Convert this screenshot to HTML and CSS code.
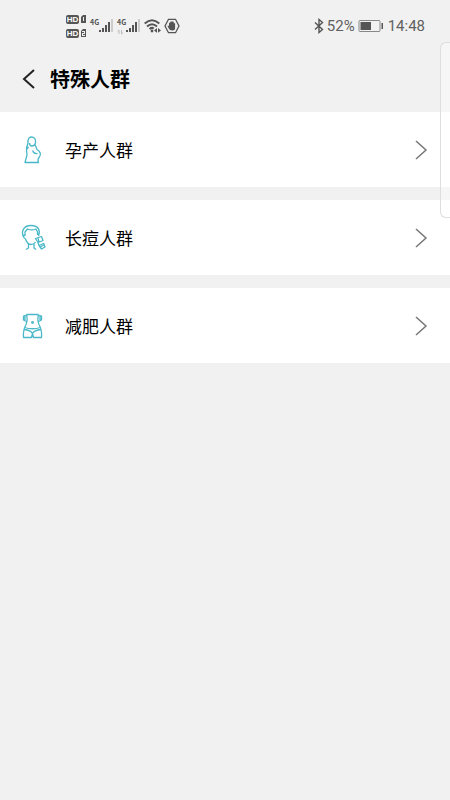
FILE: index.html
```html
<!DOCTYPE html>
<html lang="zh-CN">
<head>
<meta charset="utf-8">
<meta name="viewport" content="width=device-width, initial-scale=1">
<title>特殊人群</title>
<link rel="stylesheet" href="styles.css">
</head>
<body>
<div class="status">
  <div class="status-left">
    <div class="sims">
      <div class="sim"><span class="hd">HD</span><svg width="6" height="8" viewBox="0 0 6 8"><path class="solid" fill-rule="evenodd" d="M0 2l2-2h3v8H0zM2 2v4h1V2z"/></svg></div>
      <div class="sim"><span class="hd">HD</span><svg width="6" height="8" viewBox="0 0 6 8"><path class="solid" fill-rule="evenodd" d="M0 2l2-2h3v8H0zM1 2v1h2v1H1v3h3V6H2V5h2V2z"/></svg></div>
    </div>
    <div class="signal">
      <span class="net">4G</span>
      <svg width="15" height="14" viewBox="0 0 15 14"><path class="solid" d="M0 11h2v2H0zM3 9h2v4H3zM6 6h2v7H6zM9 3h2v10H9z"/><path class="faint" d="M12 0h2v13h-2z"/></svg>
    </div>
    <div class="signal">
      <span class="net">4G</span>
      <svg class="arrows" width="7" height="6" viewBox="0 0 7 6"><path d="M2 5V1L.7 2.300M4.500 1v4l1.400-1.300"/></svg>
      <svg width="15" height="14" viewBox="0 0 15 14"><path class="solid" d="M0 11h2v2H0zM3 9h2v4H3zM6 6h2v7H6zM9 3h2v10H9z"/><path class="faint" d="M12 0h2v13h-2z"/></svg>
    </div>
    <svg class="wifi" width="17" height="14" viewBox="0 0 17 14"><path d="M.7 4.500Q8-2 15.300 4.500M3 7.500Q8 3 13 7.500M5.500 10Q8 8 9.800 9.500"/><circle class="solid" cx="8" cy="12" r="1.400"/><path class="solid" d="m10 11.400 3-2.300v4.600zM17 11.400l-3-2.300v4.600z"/></svg>
    <svg class="hand" width="16" height="16" viewBox="0 0 16 16"><path d="M4.500 1.300h7L15 8l-3.500 6.700h-7L1 8z"/><path class="solid" d="M5 8V5q.6-.8 1.200 0V4q.6-.8 1.200 0v-.5q.6-.8 1.200 0V4q.6-.8 1.200 0v1.500q.7-.8 1.300 0V10q0 2.500-2.800 2.500Q5.500 12.500 4.500 10L3.500 8q.5-.9 1.500 0z"/></svg>
  </div>
  <div class="status-right">
    <svg class="bluetooth" width="10" height="16" viewBox="0 0 10 16"><path d="m1 4.500 7.500 7L5 14.500v-13l3.500 3L1 11.500"/></svg>
    <span>52%</span>
    <svg class="battery" width="26" height="14" viewBox="0 0 26 14"><rect x="1" y="1.500" width="21" height="11" rx="1"/><path class="solid" d="M2.500 3H13v8H2.500zM23.500 4H25v6h-1.500z"/></svg>
    <span>14:48</span>
  </div>
</div>
<header class="header">
  <button class="back" type="button" aria-label="返回"><svg width="14" height="20" viewBox="0 0 14 20"><path d="M12 1 2 10l10 9"/></svg></button>
  <h1>特殊人群</h1>
</header>
<main class="list">
  <a class="row" href="#pregnancy">
    <svg class="icon" width="26" height="30" viewBox="0 0 26 30"><path d="M8 8.500C7.500 4 9 2 11.500 2s4.500 2 4 5.500C15 10 13.500 11 12 11c-2 0-2.500-1-2.500-3M8 8c0 2-2 3.500-1.500 6.500L8.500 12M6.500 14.500 7 20l-2 7.500h13.500c-.8-2-.5-4 .8-5.500 2.200-2.500 1-5.500-2.300-7.500L15 9.500M12.500 15.500c1 2.500 2.500 3.500 5 3"/></svg>
    <span>孕产人群</span>
    <svg class="chevron" width="14" height="20" viewBox="0 0 14 20"><path d="m2 1 10 9-10 9"/></svg>
  </a>
  <a class="row" href="#acne">
    <svg class="icon" width="26" height="30" viewBox="0 0 26 30"><path d="M3.500 14C1 9 3 2.500 11 2.500S20.500 8 18.500 13M5 13V9l2.500-3c2.500 1.200 6 1 8.500 0l1.500 3v3M5 12c-2-1-2 3 .5 4C6.500 19 8 21.500 11 21.500c2 0 3.500-1 4.500-2.500M8.500 21v4L6 26.500M14 20.500V25l2 1.500M15.500 15.500l6-2 1.500 4-5 2zM18 15l1 4M18 19.500l5-2M18 19.500l1 3 4.500-2M19 22.500l2.500 3.500 3.500-2-1.500-4M20 24l4-2"/></svg>
    <span>长痘人群</span>
    <svg class="chevron" width="14" height="20" viewBox="0 0 14 20"><path d="m2 1 10 9-10 9"/></svg>
  </a>
  <a class="row" href="#slimming">
    <svg class="icon" width="26" height="30" viewBox="0 0 26 30"><path d="M6.500 3.500h12M6.500 3.500c1 4 1 7-.5 10C4 17 3 21 3.500 26.500h8l1-4 1 4h8C22 21 21 17 19 13.500c-1.500-3-1.500-6-.5-10M4.500 16.500q8 2.500 16 0M4 18.500c5 .5 7.500 2 8.500 4 1-2 3.500-3.500 8.500-4M6.500 4l-3 1v4l3 1.500M18.500 4l3 1v4l-3 1.500M5 5v4M20 5v4"/><circle cx="12.500" cy="11.500" r=".8"/></svg>
    <span>减肥人群</span>
    <svg class="chevron" width="14" height="20" viewBox="0 0 14 20"><path d="m2 1 10 9-10 9"/></svg>
  </a>
</main>
<div class="edge-panel"></div>
</body>
</html>
```
FILE: styles.css
```css
* { box-sizing: border-box; }
body {
  margin: 0;
  min-height: 100vh;
  background: #f1f1f1;
  color: #000;
  font-family: "Liberation Sans", "Noto Sans CJK SC", sans-serif;
}
svg { display: block; flex: none; fill: none; stroke: #555; }
.solid { fill: #555; stroke: none; }
.faint { fill: #ccc; stroke: none; }
.status {
  display: flex;
  justify-content: space-between;
  align-items: center;
  height: 52px;
  padding: 0 25px 0 66px;
  color: #606060;
}
.status-left, .status-right { display: flex; align-items: center; }
.status-left { gap: 3px; }
.sims { display: flex; flex-direction: column; gap: 5px; }
.sim { display: flex; align-items: center; gap: 2px; }
.hd {
  width: 13px;
  height: 9px;
  border-radius: 2px;
  background: #555;
  color: #fff;
  font-size: 8px;
  font-weight: 700;
  line-height: 9px;
  text-align: center;
}
.signal { position: relative; display: flex; align-items: center; }
.net {
  height: 18px;
  width: 9px;
  color: #555;
  font-family: "Noto Sans CJK SC", sans-serif;
  font-size: 7px;
  font-weight: 700;
  line-height: 10px;
}
.arrows { position: absolute; left: 0; bottom: 0; stroke: #bbb; }
.wifi { stroke-width: 2; }
.hand { stroke-width: 1.3; }
.status-right {
  gap: 3px;
  font-family: Roboto, sans-serif;
  font-size: 15px;
}
.bluetooth { stroke-width: 1.4; }
.battery { margin-right: 1px; }
.battery rect { stroke: #888; }
.header {
  display: flex;
  align-items: center;
  gap: 14px;
  height: 60px;
  padding: 0 22px 6px;
}
.back { padding: 0; border: 0; background: none; }
.back svg { stroke: #222; stroke-width: 2; }
h1 { margin: 0; padding-top: 2px; font-size: 20px; line-height: 28px; font-weight: 700; }
.list { display: flex; flex-direction: column; gap: 13px; }
.row {
  display: flex;
  align-items: center;
  height: 75px;
  padding: 0 22px 0 20px;
  background: #fff;
  color: #000;
  font-size: 17px;
  text-decoration: none;
}
.row span { flex: 1; margin-left: 19px; }
.icon { stroke: #4ab8c8; stroke-width: 1.3; stroke-linejoin: round; }
.chevron { stroke: #777; stroke-width: 1.5; }
.edge-panel {
  position: absolute;
  top: 42px;
  right: 0;
  width: 10px;
  height: 176px;
  border: 1px solid #dedede;
  border-right: 0;
  border-radius: 6px 0 0 6px;
  background: rgba(255, 255, 255, .4);
}
```
